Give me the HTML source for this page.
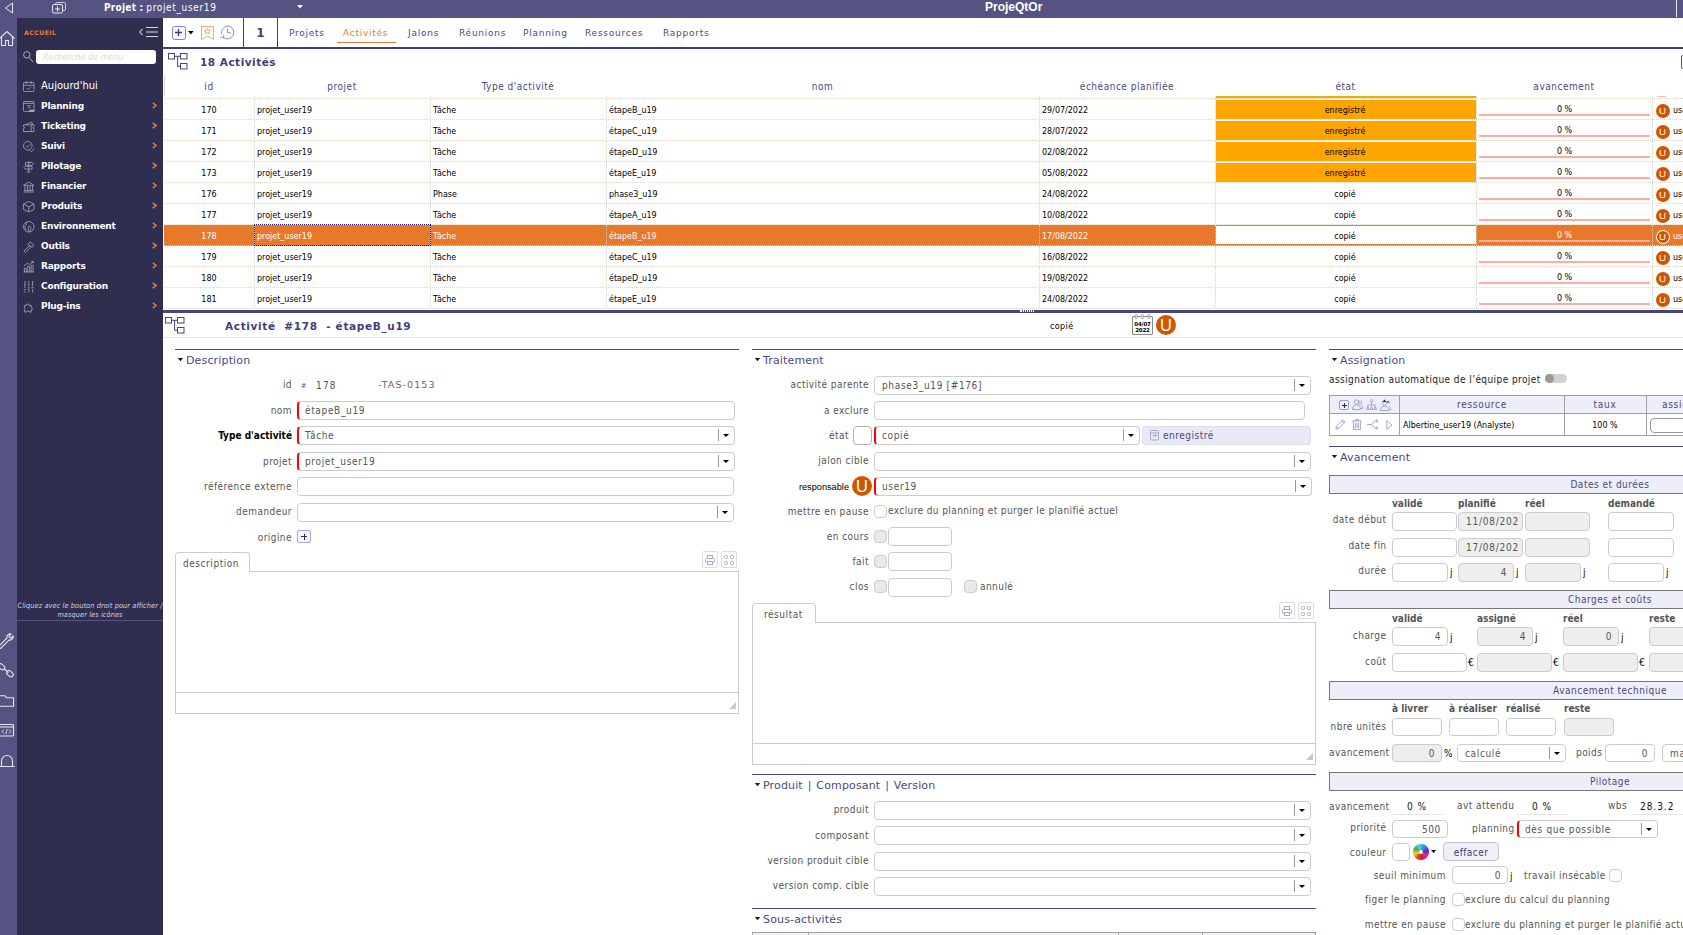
<!DOCTYPE html>
<html lang="fr">
<head>
<meta charset="utf-8">
<title>ProjeQtOr</title>
<style>
*{box-sizing:border-box;margin:0;padding:0}
html,body{width:1683px;height:935px;overflow:hidden;background:#fff}
body{font-family:"DejaVu Sans Condensed","DejaVu Sans","Liberation Sans",sans-serif;font-size:10px;letter-spacing:.45px;color:#555;position:relative}
.abs{position:absolute}
svg{display:block;overflow:visible}
/* top bar */
#topbar{left:0;top:0;width:1683px;height:18px;background:#545381;color:#fff}
#strip{left:0;top:18px;width:17px;height:917px;background:#545381}
#side{left:17px;top:18px;width:146px;height:917px;background:#2f2e4f;color:#fff}
.mi{position:absolute;left:24px;height:20px;line-height:20px;font-family:"DejaVu Sans",sans-serif;font-size:9px;letter-spacing:-.2px;font-weight:bold;color:#fff;white-space:nowrap;margin-top:1px}
.mi.n{font-weight:normal;font-size:10px;letter-spacing:0}
.ma{position:absolute;left:135px;font-family:"DejaVu Sans",sans-serif;font-size:8px;font-weight:bold;color:#e97b2c;line-height:20px;margin-top:1px;letter-spacing:0}
.mic{position:absolute;left:6px}
/* toolbar */
#tool{left:163px;top:18px;width:1520px;height:31px;background:#fff;border-bottom:2px solid #3f3e7b}
.tab{position:absolute;top:1px;height:29px;line-height:29px;font-family:"DejaVu Sans",sans-serif;font-size:9px;color:#4a4985;letter-spacing:.75px;white-space:nowrap}
/* grid */
.hd{position:absolute;top:75px;height:21px;line-height:21px;text-align:center;font-size:10px;color:#4a4985;letter-spacing:.52px;white-space:nowrap;margin-top:.5px}
.row{position:absolute;left:164px;width:1519px;height:21px;border-bottom:1px dotted #dcd8c8;font-family:"DejaVu Sans",sans-serif;font-size:8px;color:#000;line-height:24.5px;letter-spacing:0}
.row span{position:absolute;top:0;height:20px;white-space:nowrap}
.row .c{border-left:1px dotted #dcd8c8;padding-left:2px}
.row.sel{background:#e8792b;color:#fff}
.row.sel .c{border-left-color:#f3c79f}
.st{text-align:center}
.pg{position:absolute;left:1479px;width:171px;height:3px;background:#ffaaa5}
.uc{position:absolute;width:14px;height:14px;border-radius:50%;background:#d35400;color:#fff;font-size:9.7px;line-height:14.5px;text-align:center;font-family:"Liberation Sans",sans-serif;letter-spacing:0}

/* detail */
.t{position:absolute;height:14px;line-height:14px;white-space:nowrap;color:#555;margin-top:.5px}
.t.r{text-align:right}.t.c{text-align:center}
.t.b{font-weight:bold;color:#000;letter-spacing:.2px}
.t.b2{font-weight:bold;color:#555;letter-spacing:0;margin-top:-.25px}
.t.p{color:#4a4985}
.t.st{font-family:"DejaVu Sans",sans-serif;font-size:11px;letter-spacing:.15px;color:#4a4985;height:16px;line-height:16px;margin-top:-.25px}
.sl{position:absolute;height:1px;background:#4a4985}
.tri{position:absolute;width:5.4px;height:3.2px;background:#1c1c1c;clip-path:polygon(0 0,100% 0,50% 100%);margin-left:.3px}
.in{position:absolute;border:1px solid #ccc;border-radius:4px;background:#fff;line-height:18px;padding-left:7px;letter-spacing:.65px;color:#555;white-space:nowrap;overflow:hidden}
.in.rq{border-left:2px solid #f00;padding-left:6px}
.in.ro{background:#eee}
.in.num{text-align:right;padding-right:6px;padding-left:0}
.in .sp{position:absolute;right:15px;top:2px;width:1px;height:12px;background:#999}
.in .ar{position:absolute;right:5px;top:7px;width:0;height:0;border-left:3px solid transparent;border-right:3px solid transparent;border-top:3px solid #000}
.ck{position:absolute;width:13px;height:13px;border:1px solid #ccc;border-radius:4px;background:#fff}
.ck.g{background:#e9e9e9}
.bar{position:absolute;left:1329px;width:360px;height:19px;border:1px solid #777;background:#eeeef8}
.U{position:absolute;border-radius:50%;background:#d35400;color:#fff;text-align:center;font-family:"Liberation Sans",sans-serif;letter-spacing:0}
</style>
</head>
<body>
<!-- TOP BAR -->
<div id="topbar" class="abs">
  <svg class="abs" style="left:4px;top:2px" width="10" height="12" viewBox="0 0 10 12"><path d="M8.5 1 L1.5 6 L8.5 11 Z" fill="none" stroke="#e8e8f4" stroke-width="1"/></svg>
  <svg class="abs" style="left:52px;top:2px" width="15" height="12" viewBox="0 0 15 12"><rect x="3.5" y=".5" width="10" height="8" rx="1.5" fill="none" stroke="#c9c8e2" stroke-width="1"/><rect x=".5" y="2.5" width="10" height="8.5" rx="1.5" fill="#545381" stroke="#e8e8f4" stroke-width="1"/><path d="M5.5 4.5v5M3 7h5" stroke="#e8e8f4" stroke-width="1"/></svg>
  <div class="abs" style="left:104px;top:1px;height:14px;line-height:14px;font-size:10px;letter-spacing:0;white-space:nowrap"><b style="letter-spacing:.25px">Projet :</b>&nbsp;<span style="letter-spacing:.65px">projet_user19</span></div>
  <svg class="abs" style="left:297px;top:5px" width="6" height="4" viewBox="0 0 6 4"><path d="M0 0h6L3 3.5z" fill="#fff"/></svg>
  <div class="abs" style="left:985px;top:0;height:16px;line-height:15px;font-family:'Liberation Sans',sans-serif;font-weight:bold;font-size:12px;letter-spacing:0;color:#fff">ProjeQtOr</div>
  <div class="abs" style="left:1676px;top:0;width:1px;height:17px;background:#e8e8f4"></div>
</div>
<!-- ICON STRIP -->
<div id="strip" class="abs"><!--STRIPICONS-->
<svg class="abs" style="left:0;top:12px" width="15" height="17" viewBox="0 0 15 17" fill="none" stroke="#e4e4f2" stroke-width="1.100"><path d="M-.5 8.500L7 1.500l7.500 7M1.500 7v8.500h4v-5h3v5h4V7"/></svg>
<svg class="abs" style="left:0;top:615px" width="15" height="16" viewBox="0 0 15 16" fill="none" stroke="#e4e4f2" stroke-width="1.100"><path d="M-1 14.500l1.500 1L9 7a3.200 3.200 0 004-4l-2 2-1.500-.5L9 3l2-2a3.200 3.200 0 00-4 4L-1.500 13.500z"/></svg>
<svg class="abs" style="left:0;top:645px" width="15" height="16" viewBox="0 0 15 16" fill="none" stroke="#e4e4f2" stroke-width="1.100"><rect x="-2" y="1.500" width="7" height="4.500" rx="2.200" transform="rotate(40 1.500 3.700)"/><rect x="6.500" y="8.500" width="7" height="4.500" rx="2.200" transform="rotate(40 10 10.700)"/><path d="M4 5.500l4.500 4"/></svg>
<svg class="abs" style="left:0;top:677px" width="15" height="13" viewBox="0 0 15 13" fill="none" stroke="#e4e4f2" stroke-width="1.100"><path d="M-1 .800h6l1.500 2H13.500v8.500H-1"/></svg>
<svg class="abs" style="left:0;top:706px" width="15" height="13" viewBox="0 0 15 13" fill="none" stroke="#e4e4f2" stroke-width="1.100"><rect x="-1" y=".500" width="14.500" height="11.500" rx="1"/><path d="M-1 3h14.500"/><path d="M4 5.500L2 7.500l2 2M9 5.500l2 2-2 2M7.300 5L5.700 10" stroke-width=".9"/></svg>
<svg class="abs" style="left:0;top:735px" width="15" height="15" viewBox="0 0 15 15" fill="none" stroke="#e4e4f2" stroke-width="1.100"><path d="M1.500 13V8a5.500 5.500 0 0111 0v5M-.5 13.500h15"/></svg>
<!--/STRIPICONS--></div>
<!-- SIDEBAR -->
<div id="side" class="abs">
  <div class="abs" style="left:7px;top:10px;font-family:'DejaVu Sans',sans-serif;font-size:6.2px;font-weight:bold;color:#e97b2c;letter-spacing:.45px;line-height:10px">ACCUEIL</div>
  <div class="abs" style="left:19px;top:32px;width:120px;height:14px;border-radius:3px;background:#fff;font-size:8.5px;font-style:italic;color:#d8d8d8;line-height:14px;padding-left:7px;letter-spacing:.2px">Recherche de menu</div>
  <div class="mi n" style="top:57px">Aujourd'hui</div>
  <div class="mi" style="top:77px">Planning</div>
  <div class="mi" style="top:97px">Ticketing</div>
  <div class="mi" style="top:117px">Suivi</div>
  <div class="mi" style="top:137px">Pilotage</div>
  <div class="mi" style="top:157px">Financier</div>
  <div class="mi" style="top:177px">Produits</div>
  <div class="mi" style="top:197px">Environnement</div>
  <div class="mi" style="top:217px">Outils</div>
  <div class="mi" style="top:237px">Rapports</div>
  <div class="mi" style="top:257px">Configuration</div>
  <div class="mi" style="top:277px">Plug-ins</div>
  <div class="abs" style="left:0;top:583px;width:146px;text-align:center;font-size:7.3px;letter-spacing:.1px;font-style:italic;color:#d0d0e0;line-height:9px">Cliquez avec le bouton droit pour afficher /<br>masquer les icônes</div>
  <div class="abs" style="left:0;top:602px;width:146px;height:1px;background:#545381"></div>
<!--SIDEICONS-->
<svg class="abs" style="left:6px;top:63px" width="11.500" height="11.500" viewBox="0 0 12 12" fill="none" stroke="#adacc9" stroke-width=".8"><rect x=".5" y="1.5" width="11" height="9.5" rx="1"/><path d="M.5 4.5h11M3.5 0v3M8.5 0v3M4 7.5l1.5 1.5L8.2 6.3"/></svg>
<svg class="abs" style="left:6px;top:83px" width="11.500" height="11.500" viewBox="0 0 12 12" fill="none" stroke="#adacc9" stroke-width=".8"><rect x=".5" y=".5" width="11" height="10.5" rx="1"/><path d="M.5 2.5h11M4 5h4.5M5 7h3"/><path d="M7 9.5h4.5v1.5H7z" fill="#adacc9"/></svg>
<svg class="abs" style="left:6px;top:103px" width="11.500" height="11.500" viewBox="0 0 12 12" fill="none" stroke="#adacc9" stroke-width=".8"><path d="M.5 4h11v2a1 1 0 000 2v3h-11V8a1 1 0 000-2zM8.5 4v7M2 4l7-2.8L10 4"/></svg>
<svg class="abs" style="left:6px;top:123px" width="11.500" height="11.500" viewBox="0 0 12 12" fill="none" stroke="#adacc9" stroke-width=".8"><circle cx="5" cy="5" r="4.5"/><path d="M3 5l1.5 1.5L7.5 3.5M6.8 9.5l1.7 1.7L12 7.8"/></svg>
<svg class="abs" style="left:6px;top:143px" width="11.500" height="11.500" viewBox="0 0 12 12" fill="none" stroke="#adacc9" stroke-width=".8"><path d="M6 .5v11M4 11.5h4M2.5 1.5h7L11 3 9.5 4.5h-7zM9.5 5.5h-7L1 7l1.500 1.500h7z"/></svg>
<svg class="abs" style="left:6px;top:163px" width="11.500" height="11.500" viewBox="0 0 12 12" fill="none" stroke="#adacc9" stroke-width=".8"><path d="M.5 4.5L6 1l5.500 3.500zM2 5v5M4.700 5v5M7.300 5v5M10 5v5M.5 11.500h11M1 10h10"/></svg>
<svg class="abs" style="left:6px;top:183px" width="11.500" height="11.500" viewBox="0 0 12 12" fill="none" stroke="#adacc9" stroke-width=".8"><path d="M6 .5l5.500 2.750v5.500L6 11.500.5 8.750v-5.500zM.5 3.250L6 6l5.500-2.750M6 6v5.500"/></svg>
<svg class="abs" style="left:6px;top:203px" width="11.500" height="11.500" viewBox="0 0 12 12" fill="none" stroke="#adacc9" stroke-width=".8"><circle cx="6" cy="6" r="5.500"/><path d="M3.500 1.200c1 1.500.5 2.800-1 3.800s0 3 1 4.500M6.500 5.500c1.500 0 2 1 1.500 2.300S7.500 9.500 8.300 10.800M6.300 5.500c-.8 1.500-1.300 3 0 5.800"/></svg>
<svg class="abs" style="left:6px;top:223px" width="11.500" height="11.500" viewBox="0 0 12 12" fill="none" stroke="#adacc9" stroke-width=".8"><path d="M1 10.500l5.500-5.500 1.500 1.500L2.500 12zM5 3.500L7.500 1l4 3.500L9.500 6.500z"/></svg>
<svg class="abs" style="left:6px;top:243px" width="11.500" height="11.500" viewBox="0 0 12 12" fill="none" stroke="#adacc9" stroke-width=".8"><path d="M.5 11.500h11M1.500 11.500v-4h2v4M5 11.500v-6h2v6M8.500 11.500v-7h2v7M1 5l3.500-2.500L7 3.500 10.500.8M8.800.5h2v2"/></svg>
<svg class="abs" style="left:6px;top:263px" width="11.500" height="11.500" viewBox="0 0 12 12" fill="none" stroke="#adacc9" stroke-width=".8"><path d="M2 0v7.500M2 10.500V12M6 0v2M6 5v7M10 0v5.500M10 8.500V12M.8 9h2.400M4.800 3.500h2.400M8.800 7h2.400"/></svg>
<svg class="abs" style="left:6px;top:283px" width="11.500" height="11.500" viewBox="0 0 12 12" fill="none" stroke="#adacc9" stroke-width=".8"><path d="M1.5 4.5h2a1.3 1.3 0 0 1 2.6 0h2.4v2.2a1.3 1.3 0 0 1 0 2.6v2.2h-2.2a1.3 1.3 0 0 0 -2.6 0h-2.2v-2.400a1.300 1.300 0 0 0 0 -2.400z"/></svg>
<svg class="abs" style="left:134.500px;top:83.5px" width="5" height="7" viewBox="0 0 5 7" fill="none" stroke="#e97b2c" stroke-width="1.600"><path d="M.8 .8L4 3.500.8 6.200"/></svg>
<svg class="abs" style="left:134.500px;top:103.5px" width="5" height="7" viewBox="0 0 5 7" fill="none" stroke="#e97b2c" stroke-width="1.600"><path d="M.8 .8L4 3.500.8 6.200"/></svg>
<svg class="abs" style="left:134.500px;top:123.5px" width="5" height="7" viewBox="0 0 5 7" fill="none" stroke="#e97b2c" stroke-width="1.600"><path d="M.8 .8L4 3.500.8 6.200"/></svg>
<svg class="abs" style="left:134.500px;top:143.5px" width="5" height="7" viewBox="0 0 5 7" fill="none" stroke="#e97b2c" stroke-width="1.600"><path d="M.8 .8L4 3.500.8 6.200"/></svg>
<svg class="abs" style="left:134.500px;top:163.5px" width="5" height="7" viewBox="0 0 5 7" fill="none" stroke="#e97b2c" stroke-width="1.600"><path d="M.8 .8L4 3.500.8 6.200"/></svg>
<svg class="abs" style="left:134.500px;top:183.5px" width="5" height="7" viewBox="0 0 5 7" fill="none" stroke="#e97b2c" stroke-width="1.600"><path d="M.8 .8L4 3.500.8 6.200"/></svg>
<svg class="abs" style="left:134.500px;top:203.5px" width="5" height="7" viewBox="0 0 5 7" fill="none" stroke="#e97b2c" stroke-width="1.600"><path d="M.8 .8L4 3.500.8 6.200"/></svg>
<svg class="abs" style="left:134.500px;top:223.5px" width="5" height="7" viewBox="0 0 5 7" fill="none" stroke="#e97b2c" stroke-width="1.600"><path d="M.8 .8L4 3.500.8 6.200"/></svg>
<svg class="abs" style="left:134.500px;top:243.5px" width="5" height="7" viewBox="0 0 5 7" fill="none" stroke="#e97b2c" stroke-width="1.600"><path d="M.8 .8L4 3.500.8 6.200"/></svg>
<svg class="abs" style="left:134.500px;top:263.5px" width="5" height="7" viewBox="0 0 5 7" fill="none" stroke="#e97b2c" stroke-width="1.600"><path d="M.8 .8L4 3.500.8 6.200"/></svg>
<svg class="abs" style="left:134.500px;top:283.5px" width="5" height="7" viewBox="0 0 5 7" fill="none" stroke="#e97b2c" stroke-width="1.600"><path d="M.8 .8L4 3.500.8 6.200"/></svg>
<svg class="abs" style="left:122px;top:8px" width="20" height="12" viewBox="0 0 20 12" fill="none" stroke="#d6d6e8" stroke-width="1.100"><path d="M3.500 3L.8 6l2.700 3M7 1.500h12M7 6h12M7 10.500h12"/></svg>
<svg class="abs" style="left:6px;top:33px" width="11" height="12" viewBox="0 0 11 12" fill="none" stroke="#adacc9" stroke-width="1"><circle cx="3.800" cy="3.800" r="3.200"/><path d="M6 6.500l4 4.500"/></svg>
<!--/SIDEICONS-->
</div>
<!-- TOOLBAR -->
<div id="tool" class="abs">
<!--TOOLICONS-->
<div class="abs" style="left:8.500px;top:7.500px;width:14px;height:14px;border:1px solid #8483ba;border-radius:2.500px;background:#f7f7fd"></div>
<svg class="abs" style="left:12px;top:11px" width="7" height="7" viewBox="0 0 7 7" stroke="#3f3e7b" stroke-width="1.300"><path d="M3.500 0v7M0 3.500h7"/></svg>
<svg class="abs" style="left:25px;top:13px" width="6" height="4" viewBox="0 0 6 4"><path d="M0 0h5.600L2.800 3.400z" fill="#000"/></svg>
<svg class="abs" style="left:38px;top:7.500px" width="13" height="14" viewBox="0 0 13 14" fill="none" stroke="#f2a06a" stroke-width=".9"><path d="M.5 .5h12v13L6.500 10 .5 13.500z"/><path d="M6.500 2.300l.9 1.900 2 .2-1.500 1.400.4 2-1.800-1-1.800 1 .4-2L3.600 4.400l2-.2z"/></svg>
<svg class="abs" style="left:57px;top:7px" width="15" height="15" viewBox="0 0 15 15" fill="none" stroke="#8483ba" stroke-width=".9"><path d="M3.200 12.500A6.500 6.500 0 108 1a6.500 6.500 0 00-6.200 8.500"/><path d="M.3 11.800l3.200 1.200.3-3.200"/><path d="M7.500 3.500v4.300h3.500"/></svg>
<!--/TOOLICONS-->
  <div class="abs" style="left:80px;top:0;width:1px;height:29px;background:#3f3e7b"></div>
  <div class="abs" style="left:114px;top:0;width:1px;height:29px;background:#3f3e7b"></div>
  <div class="abs" style="left:81px;top:0;width:33px;height:29px;line-height:30px;text-align:center;font-family:'DejaVu Sans',sans-serif;font-size:12px;letter-spacing:0;font-weight:bold;color:#3f3e7b">1</div>
  <div class="tab" style="left:126px">Projets</div>
  <div class="tab" style="left:180px;color:#e97b2c">Activités</div>
  <div class="abs" style="left:174px;top:24px;width:59px;height:1px;background:#e97b2c"></div>
  <div class="tab" style="left:245px">Jalons</div>
  <div class="tab" style="left:296px">Réunions</div>
  <div class="tab" style="left:360px">Planning</div>
  <div class="tab" style="left:422px">Ressources</div>
  <div class="tab" style="left:500px">Rapports</div>
</div>
<!-- LIST HEADER -->
<div class="abs" style="left:200px;top:54px;height:16px;line-height:16px;font-family:'DejaVu Sans',sans-serif;font-size:10.5px;letter-spacing:.5px;font-weight:bold;color:#3f3e7b;white-space:nowrap;margin-top:-.5px">18 Activités</div>
<div class="abs" style="left:1681px;top:55px;width:6px;height:14px;border:1px solid #545381;border-radius:2px"></div>
<div class="hd" style="left:164px;width:90px">id</div>
<div class="hd" style="left:254px;width:176px">projet</div>
<div class="hd" style="left:430px;width:176px">Type d'activité</div>
<div class="hd" style="left:606px;width:433px">nom</div>
<div class="hd" style="left:1039px;width:176px">échéance planifiée</div>
<div class="hd" style="left:1215px;width:261px">état</div>
<div class="hd" style="left:1476px;width:176px">avancement</div>
<div class="abs" style="left:164px;top:75px;width:1px;height:21px;background:#d8d8d8"></div>
<div id="grid"><div class="abs" style="left:1216px;top:96px;width:260px;height:2px;background:#ffa500"></div>
<div class="abs" style="left:1657px;top:96px;width:9px;height:1px;background:#f3c4b0"></div>
<div class="abs" style="left:164px;top:98px;width:1519px;height:0;border-top:1px dotted #dcd8c8"></div>
<div class="abs" style="left:254px;top:96px;width:0;height:3px;border-left:1px dotted #dcd8c8"></div>
<div class="abs" style="left:430px;top:96px;width:0;height:3px;border-left:1px dotted #dcd8c8"></div>
<div class="abs" style="left:606px;top:96px;width:0;height:3px;border-left:1px dotted #dcd8c8"></div>
<div class="abs" style="left:1039px;top:96px;width:0;height:3px;border-left:1px dotted #dcd8c8"></div>
<div class="abs" style="left:1215px;top:96px;width:0;height:3px;border-left:1px dotted #dcd8c8"></div>
<div class="abs" style="left:1476px;top:96px;width:0;height:3px;border-left:1px dotted #dcd8c8"></div>
<div class="abs" style="left:1652px;top:96px;width:0;height:3px;border-left:1px dotted #dcd8c8"></div>
<div class="row" style="top:99px"><span style="left:0;width:90px;text-align:center">170</span><span class="c" style="left:90px;width:176px;">projet_user19</span><span class="c" style="left:266px;width:176px;">Tâche</span><span class="c" style="left:442px;width:433px;">étapeB_u19</span><span class="c" style="left:875px;width:176px;">29/07/2022</span><span class="c st" style="left:1051px;width:261px;"><i class="abs" style="left:0;top:1px;width:260px;height:18.5px;background:#ffa500"></i><b class="abs" style="left:0;width:258px;font-weight:normal">enregistré</b></span><span class="c" style="left:1312px;width:176px;text-align:center;padding:0;line-height:22.5px">0 %</span><i class="pg" style="left:1315px;top:14.5px;height:2px"></i><span class="c" style="left:1488px;width:31px;"></span><i class="uc" style="left:1491.5px;top:4.5px;font-style:normal">U</i><span style="left:1509px">user19</span></div>
<div class="row" style="top:120px"><span style="left:0;width:90px;text-align:center">171</span><span class="c" style="left:90px;width:176px;">projet_user19</span><span class="c" style="left:266px;width:176px;">Tâche</span><span class="c" style="left:442px;width:433px;">étapeC_u19</span><span class="c" style="left:875px;width:176px;">28/07/2022</span><span class="c st" style="left:1051px;width:261px;"><i class="abs" style="left:0;top:1px;width:260px;height:18.5px;background:#ffa500"></i><b class="abs" style="left:0;width:258px;font-weight:normal">enregistré</b></span><span class="c" style="left:1312px;width:176px;text-align:center;padding:0;line-height:22.5px">0 %</span><i class="pg" style="left:1315px;top:14.5px;height:2px"></i><span class="c" style="left:1488px;width:31px;"></span><i class="uc" style="left:1491.5px;top:4.5px;font-style:normal">U</i><span style="left:1509px">user19</span></div>
<div class="row" style="top:141px"><span style="left:0;width:90px;text-align:center">172</span><span class="c" style="left:90px;width:176px;">projet_user19</span><span class="c" style="left:266px;width:176px;">Tâche</span><span class="c" style="left:442px;width:433px;">étapeD_u19</span><span class="c" style="left:875px;width:176px;">02/08/2022</span><span class="c st" style="left:1051px;width:261px;"><i class="abs" style="left:0;top:1px;width:260px;height:18.5px;background:#ffa500"></i><b class="abs" style="left:0;width:258px;font-weight:normal">enregistré</b></span><span class="c" style="left:1312px;width:176px;text-align:center;padding:0;line-height:22.5px">0 %</span><i class="pg" style="left:1315px;top:14.5px;height:2px"></i><span class="c" style="left:1488px;width:31px;"></span><i class="uc" style="left:1491.5px;top:4.5px;font-style:normal">U</i><span style="left:1509px">user19</span></div>
<div class="row" style="top:162px"><span style="left:0;width:90px;text-align:center">173</span><span class="c" style="left:90px;width:176px;">projet_user19</span><span class="c" style="left:266px;width:176px;">Tâche</span><span class="c" style="left:442px;width:433px;">étapeE_u19</span><span class="c" style="left:875px;width:176px;">05/08/2022</span><span class="c st" style="left:1051px;width:261px;"><i class="abs" style="left:0;top:1px;width:260px;height:18.5px;background:#ffa500"></i><b class="abs" style="left:0;width:258px;font-weight:normal">enregistré</b></span><span class="c" style="left:1312px;width:176px;text-align:center;padding:0;line-height:22.5px">0 %</span><i class="pg" style="left:1315px;top:14.5px;height:2px"></i><span class="c" style="left:1488px;width:31px;"></span><i class="uc" style="left:1491.5px;top:4.5px;font-style:normal">U</i><span style="left:1509px">user19</span></div>
<div class="row" style="top:183px"><span style="left:0;width:90px;text-align:center">176</span><span class="c" style="left:90px;width:176px;">projet_user19</span><span class="c" style="left:266px;width:176px;">Phase</span><span class="c" style="left:442px;width:433px;">phase3_u19</span><span class="c" style="left:875px;width:176px;">24/08/2022</span><span class="c st" style="left:1051px;width:261px;"><b class="abs" style="left:0;width:258px;font-weight:normal">copié</b></span><span class="c" style="left:1312px;width:176px;text-align:center;padding:0;line-height:22.5px">0 %</span><i class="pg" style="left:1315px;top:14.5px;height:2px"></i><span class="c" style="left:1488px;width:31px;"></span><i class="uc" style="left:1491.5px;top:4.5px;font-style:normal">U</i><span style="left:1509px">user19</span></div>
<div class="row" style="top:204px"><span style="left:0;width:90px;text-align:center">177</span><span class="c" style="left:90px;width:176px;">projet_user19</span><span class="c" style="left:266px;width:176px;">Tâche</span><span class="c" style="left:442px;width:433px;">étapeA_u19</span><span class="c" style="left:875px;width:176px;">10/08/2022</span><span class="c st" style="left:1051px;width:261px;"><b class="abs" style="left:0;width:258px;font-weight:normal">copié</b></span><span class="c" style="left:1312px;width:176px;text-align:center;padding:0;line-height:22.5px">0 %</span><i class="pg" style="left:1315px;top:14.5px;height:2px"></i><span class="c" style="left:1488px;width:31px;"></span><i class="uc" style="left:1491.5px;top:4.5px;font-style:normal">U</i><span style="left:1509px">user19</span></div>
<div class="row sel" style="top:225px"><span style="left:0;width:90px;text-align:center">178</span><span class="c" style="left:90px;width:176px;">projet_user19</span><span class="c" style="left:266px;width:176px;">Tâche</span><span class="c" style="left:442px;width:433px;">étapeB_u19</span><span class="c" style="left:875px;width:176px;">17/08/2022</span><span class="c st" style="left:1051px;width:261px;"><i class="abs" style="left:0;top:1px;width:260px;height:18px;background:#fff"></i><b class="abs" style="left:0;width:258px;font-weight:normal;color:#000">copié</b></span><span class="c" style="left:1312px;width:176px;text-align:center;padding:0;line-height:22.5px">0 %</span><i class="pg" style="left:1315px;top:14.5px;height:2px"></i><span class="c" style="left:1488px;width:31px;"></span><i class="uc" style="left:1491.5px;top:4.5px;font-style:normal;background:#d35400;box-shadow:inset 0 0 0 1px #fff">U</i><span style="left:1509px">user19</span></div>
<div class="row" style="top:246px"><span style="left:0;width:90px;text-align:center">179</span><span class="c" style="left:90px;width:176px;">projet_user19</span><span class="c" style="left:266px;width:176px;">Tâche</span><span class="c" style="left:442px;width:433px;">étapeC_u19</span><span class="c" style="left:875px;width:176px;">16/08/2022</span><span class="c st" style="left:1051px;width:261px;"><b class="abs" style="left:0;width:258px;font-weight:normal">copié</b></span><span class="c" style="left:1312px;width:176px;text-align:center;padding:0;line-height:22.5px">0 %</span><i class="pg" style="left:1315px;top:14.5px;height:2px"></i><span class="c" style="left:1488px;width:31px;"></span><i class="uc" style="left:1491.5px;top:4.5px;font-style:normal">U</i><span style="left:1509px">user19</span></div>
<div class="row" style="top:267px"><span style="left:0;width:90px;text-align:center">180</span><span class="c" style="left:90px;width:176px;">projet_user19</span><span class="c" style="left:266px;width:176px;">Tâche</span><span class="c" style="left:442px;width:433px;">étapeD_u19</span><span class="c" style="left:875px;width:176px;">19/08/2022</span><span class="c st" style="left:1051px;width:261px;"><b class="abs" style="left:0;width:258px;font-weight:normal">copié</b></span><span class="c" style="left:1312px;width:176px;text-align:center;padding:0;line-height:22.5px">0 %</span><i class="pg" style="left:1315px;top:14.5px;height:2px"></i><span class="c" style="left:1488px;width:31px;"></span><i class="uc" style="left:1491.5px;top:4.5px;font-style:normal">U</i><span style="left:1509px">user19</span></div>
<div class="row" style="top:288px"><span style="left:0;width:90px;text-align:center">181</span><span class="c" style="left:90px;width:176px;">projet_user19</span><span class="c" style="left:266px;width:176px;">Tâche</span><span class="c" style="left:442px;width:433px;">étapeE_u19</span><span class="c" style="left:875px;width:176px;">24/08/2022</span><span class="c st" style="left:1051px;width:261px;"><b class="abs" style="left:0;width:258px;font-weight:normal">copié</b></span><span class="c" style="left:1312px;width:176px;text-align:center;padding:0;line-height:22.5px">0 %</span><i class="pg" style="left:1315px;top:14.5px;height:2px"></i><span class="c" style="left:1488px;width:31px;"></span><i class="uc" style="left:1491.5px;top:4.5px;font-style:normal">U</i><span style="left:1509px">user19</span></div>
<div class="abs" style="left:254px;top:224px;width:177px;height:22px;border:1px dotted #1a1a8a"></div></div><!--/grid-->
<div class="abs" style="left:163px;top:310px;width:1520px;height:2.500px;background:#45447f"></div>
<!--DETAIL-->
<div class="abs" style="left:163px;top:337px;width:1520px;height:1px;background:#e2e2ee"></div>
<div class="t " style="left:225px;top:318.5px;font-family:'DejaVu Sans',sans-serif;font-size:10.5px;font-weight:bold;color:#3f3e7b;letter-spacing:.65px">Activité&nbsp; #178&nbsp; - étapeB_u19</div>
<div class="t " style="left:1050px;top:319.5px;font-family:'DejaVu Sans',sans-serif;font-size:8px;color:#000;letter-spacing:.4px">copié</div>
<div class="U" style="left:1156px;top:315px;width:20px;height:20px;line-height:20px;font-size:16.5px">U</div>
<div class="sl" style="left:175px;top:349px;width:564px"></div>
<i class="tri" style="left:177.5px;top:358px"></i>
<div class="t st" style="left:186px;top:353px;">Description</div>
<div class="t r " style="left:-8px;width:300px;top:377.5px;">id</div>
<div class="t " style="left:301px;top:378px;font-size:7px">#</div>
<div class="t " style="left:316px;top:378.5px;letter-spacing:1.2px">178</div>
<div class="t " style="left:378px;top:377.5px;font-family:'DejaVu Sans',sans-serif;font-size:9.5px;letter-spacing:1.1px;color:#666">-TAS-0153</div>
<div class="t r " style="left:-8px;width:300px;top:403px;">nom</div>
<div class="in rq" style="left:297px;top:401px;width:438px;height:19px;">étapeB_u19</div>
<div class="t r b" style="left:-8px;width:300px;top:428.5px;letter-spacing:0">Type d'activité</div>
<div class="in rq" style="left:297px;top:426px;width:438px;height:19px;">Tâche<i class="sp"></i><i class="ar"></i></div>
<div class="t r " style="left:-8px;width:300px;top:454px;">projet</div>
<div class="in rq" style="left:297px;top:452px;width:438px;height:19px;">projet_user19<i class="sp"></i><i class="ar"></i></div>
<div class="t r " style="left:-8px;width:300px;top:479px;">référence externe</div>
<div class="in " style="left:297px;top:477px;width:437px;height:19px;"></div>
<div class="t r " style="left:-8px;width:300px;top:504.5px;">demandeur</div>
<div class="in " style="left:297px;top:502.5px;width:437px;height:19px;"><i class="sp"></i><i class="ar"></i></div>
<div class="t r " style="left:-8px;width:300px;top:530px;">origine</div>
<div class="abs" style="left:297px;top:530px;width:14px;height:13px;border:1px solid #a9a8d0;border-radius:2px;background:#f4f4fb"><i class="abs" style="left:3px;top:5px;width:6px;height:1px;background:#2a2a7a"></i><i class="abs" style="left:5.5px;top:2.5px;width:1px;height:6px;background:#2a2a7a"></i></div>
<div class="abs" style="left:175px;top:571px;width:564px;height:121.5px;border:1px solid #ccc;background:#fff"></div>
<div class="abs" style="left:175px;top:691.5px;width:564px;height:22px;border:1px solid #ccc;background:#fff"></div>
<div class="abs" style="left:175px;top:552px;width:75px;height:20px;border:1px solid #ccc;border-bottom:none;border-radius:4px 4px 0 0;background:#fff"></div>
<div class="t " style="left:183px;top:556px;letter-spacing:.55px">description</div>
<svg class="abs" style="left:729px;top:701.5px" width="7" height="7" viewBox="0 0 7 7"><path d="M7 0V7H0z" fill="#c8c8c8"/></svg>
<div class="abs" style="left:702px;top:551px;width:16px;height:17px;border:1px solid #ddd;border-radius:2px;background:#fff"></div>
<div class="abs" style="left:721px;top:551px;width:16px;height:17px;border:1px solid #ddd;border-radius:2px;background:#fff"></div>
<svg class="abs" style="left:705px;top:554.5px" width="10" height="10" viewBox="0 0 10 10" fill="none" stroke="#a9a8d0" stroke-width="1"><rect x="2.5" y=".5" width="5" height="3"/><rect x=".5" y="3.5" width="9" height="4" rx="1"/><rect x="2.5" y="6.5" width="5" height="3" fill="#fff"/></svg>
<svg class="abs" style="left:724px;top:554.5px" width="10" height="10" viewBox="0 0 10 10" fill="none" stroke="#a9a8d0" stroke-width="1"><rect x=".5" y=".5" width="3" height="3" rx="1"/><rect x="6.5" y=".5" width="3" height="3" rx="1"/><rect x=".5" y="6.5" width="3" height="3" rx="1"/><rect x="6.5" y="6.5" width="3" height="3" rx="1"/></svg>
<div class="sl" style="left:752px;top:349px;width:564px"></div>
<i class="tri" style="left:754.5px;top:358px"></i>
<div class="t st" style="left:763px;top:353px;">Traitement</div>
<div class="t r " style="left:569px;width:300px;top:377.5px;">activité parente</div>
<div class="in " style="left:874px;top:376px;width:437px;height:19px;">phase3_u19 [#176]<i class="sp"></i><i class="ar"></i></div>
<div class="t r " style="left:569px;width:300px;top:403px;">a exclure</div>
<div class="in " style="left:874px;top:401px;width:431px;height:19px;"></div>
<div class="t r " style="left:549px;width:300px;top:428.5px;">état</div>
<div class="abs" style="left:853px;top:426px;width:19px;height:19px;border:1px solid #b0b0b0;border-radius:4px;background:#fff"></div>
<div class="in rq" style="left:874px;top:426px;width:266px;height:19px;">copié<i class="sp"></i><i class="ar"></i></div>
<div class="abs" style="left:1142px;top:426px;width:169px;height:19px;border-radius:3px;background:#e9e9f6;border:1px solid #dedeee"></div>
<svg class="abs" style="left:1150px;top:430px" width="10" height="11" viewBox="0 0 10 11" fill="none" stroke="#a9a8d0" stroke-width="1"><rect x=".5" y=".5" width="8" height="9.5" rx="1"/><path d="M1 3h7M2.5 5.5h4M5 4l1.5 1.5L5 7"/></svg>
<div class="t p" style="left:1163px;top:428px;letter-spacing:.5px">enregistré</div>
<div class="t r " style="left:569px;width:300px;top:453.5px;">jalon cible</div>
<div class="in " style="left:874px;top:452px;width:437px;height:19px;"><i class="sp"></i><i class="ar"></i></div>
<div class="t r " style="left:549px;width:300px;top:479px;font-family:'Liberation Sans',sans-serif;color:#000;letter-spacing:0;font-size:9.2px">responsable</div>
<div class="U" style="left:852px;top:476px;width:20px;height:20px;line-height:20px;font-size:16.5px">U</div>
<div class="in rq" style="left:874px;top:477px;width:438px;height:19px;">user19<i class="sp"></i><i class="ar"></i></div>
<div class="t r " style="left:569px;width:300px;top:504.5px;">mettre en pause</div>
<div class="ck" style="left:874px;top:505px"></div>
<div class="t " style="left:888px;top:503.5px;letter-spacing:.4px">exclure du planning et purger le planifié actuel</div>
<div class="t r " style="left:569px;width:300px;top:529px;">en cours</div>
<div class="ck g" style="left:874px;top:530px"></div>
<div class="in " style="left:888px;top:527px;width:64px;height:19px;"></div>
<div class="t r " style="left:569px;width:300px;top:554.5px;">fait</div>
<div class="ck g" style="left:874px;top:555px"></div>
<div class="in " style="left:888px;top:552px;width:64px;height:19px;"></div>
<div class="t r " style="left:569px;width:300px;top:579.5px;">clos</div>
<div class="ck g" style="left:874px;top:580px"></div>
<div class="in " style="left:888px;top:577.5px;width:64px;height:19px;"></div>
<div class="ck g" style="left:964px;top:580px"></div>
<div class="t " style="left:980px;top:579px;">annulé</div>
<div class="abs" style="left:752px;top:622px;width:564px;height:122px;border:1px solid #ccc;background:#fff"></div>
<div class="abs" style="left:752px;top:743px;width:564px;height:22px;border:1px solid #ccc;background:#fff"></div>
<div class="abs" style="left:752px;top:603px;width:64px;height:20px;border:1px solid #ccc;border-bottom:none;border-radius:4px 4px 0 0;background:#fff"></div>
<div class="t " style="left:764px;top:607px;letter-spacing:.55px">résultat</div>
<svg class="abs" style="left:1306px;top:753px" width="7" height="7" viewBox="0 0 7 7"><path d="M7 0V7H0z" fill="#c8c8c8"/></svg>
<div class="abs" style="left:1279px;top:602px;width:16px;height:17px;border:1px solid #ddd;border-radius:2px;background:#fff"></div>
<div class="abs" style="left:1298px;top:602px;width:16px;height:17px;border:1px solid #ddd;border-radius:2px;background:#fff"></div>
<svg class="abs" style="left:1282px;top:605.5px" width="10" height="10" viewBox="0 0 10 10" fill="none" stroke="#a9a8d0" stroke-width="1"><rect x="2.5" y=".5" width="5" height="3"/><rect x=".5" y="3.5" width="9" height="4" rx="1"/><rect x="2.5" y="6.5" width="5" height="3" fill="#fff"/></svg>
<svg class="abs" style="left:1301px;top:605.5px" width="10" height="10" viewBox="0 0 10 10" fill="none" stroke="#a9a8d0" stroke-width="1"><rect x=".5" y=".5" width="3" height="3" rx="1"/><rect x="6.5" y=".5" width="3" height="3" rx="1"/><rect x=".5" y="6.5" width="3" height="3" rx="1"/><rect x="6.5" y="6.5" width="3" height="3" rx="1"/></svg>
<div class="sl" style="left:752px;top:774px;width:564px"></div>
<i class="tri" style="left:754.5px;top:783px"></i>
<div class="t st" style="left:763px;top:778px;"><span style="word-spacing:1.2px">Produit | Composant | Version</span></div>
<div class="t r " style="left:569px;width:300px;top:802.5px;">produit</div>
<div class="in " style="left:874px;top:801px;width:437px;height:19px;"><i class="sp"></i><i class="ar"></i></div>
<div class="t r " style="left:569px;width:300px;top:828.5px;">composant</div>
<div class="in " style="left:874px;top:826px;width:437px;height:19px;"><i class="sp"></i><i class="ar"></i></div>
<div class="t r " style="left:569px;width:300px;top:853.5px;">version produit cible</div>
<div class="in " style="left:874px;top:852px;width:437px;height:19px;"><i class="sp"></i><i class="ar"></i></div>
<div class="t r " style="left:569px;width:300px;top:878.5px;">version comp. cible</div>
<div class="in " style="left:874px;top:877px;width:437px;height:19px;"><i class="sp"></i><i class="ar"></i></div>
<div class="sl" style="left:752px;top:908px;width:564px"></div>
<i class="tri" style="left:754.5px;top:917px"></i>
<div class="t st" style="left:763px;top:912px;">Sous-activités</div>
<div class="abs" style="left:752px;top:932px;width:564px;height:10px;border:1px solid #a0a0a0;background:#eeeef8"></div>
<div class="abs" style="left:808px;top:932px;width:1px;height:10px;background:#a0a0a0"></div>
<div class="abs" style="left:1118px;top:932px;width:1px;height:10px;background:#a0a0a0"></div>
<div class="abs" style="left:1202px;top:932px;width:1px;height:10px;background:#a0a0a0"></div>
<div class="sl" style="left:1329px;top:349px;width:361px"></div>
<i class="tri" style="left:1331.5px;top:358px"></i>
<div class="t st" style="left:1340px;top:353px;">Assignation</div>
<div class="t " style="left:1329px;top:372px;color:#222;letter-spacing:.42px">assignation automatique de l’équipe projet</div>
<div class="abs" style="left:1545px;top:374px;width:22px;height:9px;border-radius:5px;background:#d2d2d2"><i class="abs" style="left:0;top:0;width:9px;height:9px;border-radius:50%;background:#9a9a9a"></i></div>
<div class="abs" style="left:1329px;top:395px;width:360px;height:19px;background:#eeeef8;border:1px solid #a0a0a0"></div>
<div class="abs" style="left:1329px;top:413px;width:360px;height:23px;border:1px solid #a0a0a0"></div>
<div class="abs" style="left:1399px;top:395px;width:1px;height:41px;background:#a0a0a0"></div>
<div class="abs" style="left:1564px;top:395px;width:1px;height:41px;background:#a0a0a0"></div>
<div class="abs" style="left:1646px;top:395px;width:1px;height:41px;background:#a0a0a0"></div>
<div class="t c p" style="left:1332px;width:300px;top:397.5px;letter-spacing:.7px">ressource</div>
<div class="t c p" style="left:1455px;width:300px;top:397.5px;letter-spacing:.7px">taux</div>
<div class="t p" style="left:1662px;top:397.5px;letter-spacing:.7px">assigné</div>
<div class="t " style="left:1403px;top:418.5px;font-family:'DejaVu Sans',sans-serif;font-size:8px;color:#000;letter-spacing:0">Albertine_user19 (Analyste)</div>
<div class="t c " style="left:1455px;width:300px;top:418.5px;font-family:'DejaVu Sans',sans-serif;font-size:8px;color:#000;letter-spacing:0">100 %</div>
<div class="abs" style="left:1650px;top:418px;width:40px;height:15px;border:1px solid #999;border-radius:4px;background:#fff"></div>
<div class="sl" style="left:1329px;top:446px;width:361px"></div>
<i class="tri" style="left:1331.5px;top:455px"></i>
<div class="t st" style="left:1340px;top:450px;">Avancement</div>
<div class="bar" style="top:475px"></div>
<div class="t c p" style="left:1460px;width:300px;top:477.5px;letter-spacing:.5px">Dates et durées</div>
<div class="t b2" style="left:1392px;top:497px;">validé</div>
<div class="t b2" style="left:1458px;top:497px;">planifié</div>
<div class="t b2" style="left:1525px;top:497px;">réel</div>
<div class="t b2" style="left:1608px;top:497px;">demandé</div>
<div class="t r " style="left:1086.5px;width:300px;top:512.5px;">date début</div>
<div class="t r " style="left:1086.5px;width:300px;top:538px;">date fin</div>
<div class="t r " style="left:1086.5px;width:300px;top:563.5px;">durée</div>
<div class="in " style="left:1392px;top:512px;width:65px;height:19px;"></div>
<div class="in ro" style="left:1458px;top:512px;width:65px;height:19px;padding-left:7px;overflow:hidden;letter-spacing:.75px">11/08/202</div>
<div class="in ro" style="left:1525px;top:512px;width:65px;height:19px;"></div>
<div class="in " style="left:1608px;top:512px;width:66px;height:19px;"></div>
<div class="in " style="left:1392px;top:537.5px;width:65px;height:19px;"></div>
<div class="in ro" style="left:1458px;top:537.5px;width:65px;height:19px;padding-left:7px;overflow:hidden;letter-spacing:.75px">17/08/202</div>
<div class="in ro" style="left:1525px;top:537.5px;width:65px;height:19px;"></div>
<div class="in " style="left:1608px;top:537.5px;width:66px;height:19px;"></div>
<div class="in num" style="left:1392px;top:563px;width:56px;height:19px;"></div>
<div class="t " style="left:1450px;top:565px;color:#000">j</div>
<div class="in ro num" style="left:1458px;top:563px;width:56px;height:19px;">4</div>
<div class="t " style="left:1516px;top:565px;color:#000">j</div>
<div class="in ro num" style="left:1525px;top:563px;width:56px;height:19px;"></div>
<div class="t " style="left:1583px;top:565px;color:#000">j</div>
<div class="in num" style="left:1608px;top:563px;width:56px;height:19px;"></div>
<div class="t " style="left:1666px;top:565px;color:#000">j</div>
<div class="bar" style="top:590px"></div>
<div class="t c p" style="left:1460px;width:300px;top:592.5px;letter-spacing:.5px">Charges et coûts</div>
<div class="t b2" style="left:1392px;top:612px;">validé</div>
<div class="t b2" style="left:1477px;top:612px;">assigné</div>
<div class="t b2" style="left:1563px;top:612px;">réel</div>
<div class="t b2" style="left:1649px;top:612px;">reste</div>
<div class="t r " style="left:1086.5px;width:300px;top:628.5px;">charge</div>
<div class="t r " style="left:1086.5px;width:300px;top:654px;">coût</div>
<div class="in num" style="left:1392px;top:627px;width:56px;height:19px;">4</div>
<div class="t " style="left:1450px;top:630px;color:#000">j</div>
<div class="in ro num" style="left:1477px;top:627px;width:56px;height:19px;">4</div>
<div class="t " style="left:1535px;top:630px;color:#000">j</div>
<div class="in ro num" style="left:1563px;top:627px;width:56px;height:19px;">0</div>
<div class="t " style="left:1621px;top:630px;color:#000">j</div>
<div class="in ro num" style="left:1649px;top:627px;width:56px;height:19px;"></div>
<div class="t " style="left:1707px;top:630px;color:#000">j</div>
<div class="in " style="left:1392px;top:652.5px;width:75px;height:19px;"></div>
<div class="t " style="left:1468px;top:655px;color:#000;letter-spacing:0">€</div>
<div class="in ro" style="left:1477px;top:652.5px;width:75px;height:19px;"></div>
<div class="t " style="left:1553px;top:655px;color:#000;letter-spacing:0">€</div>
<div class="in ro" style="left:1563px;top:652.5px;width:75px;height:19px;"></div>
<div class="t " style="left:1639px;top:655px;color:#000;letter-spacing:0">€</div>
<div class="in ro" style="left:1649px;top:652.5px;width:75px;height:19px;"></div>
<div class="t " style="left:1725px;top:655px;color:#000;letter-spacing:0">€</div>
<div class="bar" style="top:681px"></div>
<div class="t c p" style="left:1460px;width:300px;top:683.5px;letter-spacing:.5px">Avancement technique</div>
<div class="t b2" style="left:1392px;top:702.5px;">à livrer</div>
<div class="t b2" style="left:1449px;top:702.5px;">à réaliser</div>
<div class="t b2" style="left:1506px;top:702.5px;">réalisé</div>
<div class="t b2" style="left:1564px;top:702.5px;">reste</div>
<div class="t r " style="left:1086.5px;width:300px;top:719px;">nbre unités</div>
<div class="in " style="left:1392px;top:718px;width:50px;height:18px;"></div>
<div class="in " style="left:1449px;top:718px;width:50px;height:18px;"></div>
<div class="in " style="left:1506px;top:718px;width:50px;height:18px;"></div>
<div class="in ro" style="left:1564px;top:718px;width:50px;height:18px;"></div>
<div class="t " style="left:1329px;top:745px;">avancement</div>
<div class="in ro num" style="left:1392px;top:744px;width:50px;height:18px;">0</div>
<div class="t " style="left:1444px;top:746.5px;color:#000;letter-spacing:0">%</div>
<div class="in " style="left:1457px;top:743.5px;width:109px;height:19px;height:18px">calculé<i class="sp"></i><i class="ar"></i></div>
<div class="t " style="left:1576px;top:745.5px;">poids</div>
<div class="in num" style="left:1605px;top:744px;width:50px;height:18px;">0</div>
<div class="in " style="left:1662px;top:744px;width:38px;height:18px;">ma</div>
<div class="bar" style="top:771.5px"></div>
<div class="t c p" style="left:1460px;width:300px;top:774px;letter-spacing:.5px">Pilotage</div>
<div class="t " style="left:1329px;top:799px;">avancement</div>
<div class="t " style="left:1407px;top:799px;color:#111;letter-spacing:1px">0 %</div>
<div class="t " style="left:1457px;top:798px;">avt attendu</div>
<div class="t " style="left:1532px;top:799px;color:#111;letter-spacing:1px">0 %</div>
<div class="t " style="left:1608px;top:798px;">wbs</div>
<div class="t " style="left:1640px;top:799px;color:#111;letter-spacing:.95px">28.3.2</div>
<div class="abs" style="left:1392px;top:814px;width:51px;height:1px;background:#e4e4e4"></div>
<div class="abs" style="left:1517px;top:814px;width:50px;height:1px;background:#e4e4e4"></div>
<div class="abs" style="left:1631px;top:814px;width:59px;height:1px;background:#e4e4e4"></div>
<div class="t r " style="left:1086.5px;width:300px;top:820px;">priorité</div>
<div class="in num" style="left:1392px;top:820px;width:56px;height:18px;">500</div>
<div class="t " style="left:1472px;top:821px;">planning</div>
<div class="in rq" style="left:1517px;top:819.5px;width:141px;height:19px;height:18px">dès que possible<i class="sp"></i><i class="ar"></i></div>
<div class="t r " style="left:1086.5px;width:300px;top:845.5px;">couleur</div>
<div class="abs" style="left:1392px;top:843px;width:18px;height:18px;border:1px solid #ccc;border-radius:4px;background:#fff"></div>
<div class="abs" style="left:1413px;top:844px;width:15.5px;height:15.5px;border-radius:50%;background:conic-gradient(#35b6ea 0deg,#2b86e3 40deg,#6a1de0 80deg,#e02f7c 125deg,#d41f2e 170deg,#e8451d 215deg,#f9d423 255deg,#45a549 300deg,#62d3d6 345deg,#35b6ea 360deg)"><i class="abs" style="left:5.5px;top:5.5px;width:4.5px;height:4.5px;border-radius:50%;background:#f4f8ff"></i></div>
<svg class="abs" style="left:1431px;top:850px" width="5" height="3" viewBox="0 0 5 3"><path d="M0 0h5L2.5 3z" fill="#000"/></svg>
<div class="abs" style="left:1443px;top:842px;width:56px;height:19px;border:1px solid #c4c4cc;border-radius:4px;background:#efeff7"></div>
<div class="t c p" style="left:1321px;width:300px;top:845px;letter-spacing:.45px;color:#3f3e7b">effacer</div>
<div class="t r " style="left:1146px;width:300px;top:868.5px;">seuil minimum</div>
<div class="in num" style="left:1452px;top:866px;width:56px;height:18px;">0</div>
<div class="t " style="left:1510px;top:869px;color:#000">j</div>
<div class="t " style="left:1524px;top:868px;">travail insécable</div>
<div class="ck" style="left:1609px;top:869px"></div>
<div class="t r " style="left:1146px;width:300px;top:892.5px;">figer le planning</div>
<div class="ck" style="left:1452px;top:893px"></div>
<div class="t " style="left:1465px;top:892px;">exclure du calcul du planning</div>
<div class="t r " style="left:1146px;width:300px;top:917.5px;">mettre en pause</div>
<div class="ck" style="left:1452px;top:918px"></div>
<div class="t " style="left:1465px;top:917px;letter-spacing:.4px">exclure du planning et purger le planifié actuel</div>
<!--/DETAIL-->
<!--MISC-->
<svg class="abs" style="left:168px;top:53px" width="20" height="17" viewBox="0 0 20 17" fill="none" stroke="#45447f" stroke-width="1"><rect x=".5" y=".5" width="6" height="5.500"/><rect x="12.500" y=".5" width="6.500" height="5.500"/><rect x="12.500" y="10.500" width="6.500" height="5.500"/><path d="M6.500 3.300h6M9.600 3.300v10h3"/></svg>
<svg class="abs" style="left:165px;top:317.3px" width="20" height="17" viewBox="0 0 20 17" fill="none" stroke="#45447f" stroke-width="1"><rect x=".5" y=".5" width="6" height="5.500"/><rect x="12.500" y=".5" width="6.500" height="5.500"/><rect x="12.500" y="10.500" width="6.500" height="5.500"/><path d="M6.500 3.300h6M9.600 3.300v10h3"/></svg>
<div class="abs" style="left:1132px;top:316px;width:21px;height:19px;border:1px solid #8a8a8a;background:#fff;border-radius:1px"></div>
<svg class="abs" style="left:1132px;top:313.500px" width="21" height="6" viewBox="0 0 21 6" fill="#fff" stroke="#8a8a8a" stroke-width=".8"><path d="M3 2.600h15" /><rect x="3.200" y=".5" width="1.800" height="4" rx=".9"/><rect x="9.600" y=".5" width="1.800" height="4" rx=".9"/><rect x="16" y=".5" width="1.800" height="4" rx=".9"/></svg>
<div class="abs" style="left:1132px;top:320.500px;width:21px;text-align:center;font-family:'DejaVu Sans',sans-serif;font-size:5.500px;line-height:6px;font-weight:bold;color:#000;letter-spacing:-.2px">04/07<br>2022</div>
<div class="abs" style="left:1020px;top:310px;width:14px;height:2px;border-top:1px dotted #fff;border-bottom:1px dotted #fff"></div>
<div class="abs" style="left:1339px;top:399.500px;width:10px;height:10.500px;border:1px solid #9d9cce;border-radius:2px;background:#f4f4fc"></div>
<svg class="abs" style="left:1341.500px;top:402.500px" width="5" height="5" viewBox="0 0 5 5" stroke="#2a2a7a" stroke-width="1.200"><path d="M2.500 0v5M0 2.500h5"/></svg>
<svg class="abs" style="left:1352px;top:399px" width="11" height="11" viewBox="0 0 11 11" fill="none" stroke="#9d9cce" stroke-width=".9"><circle cx="4.500" cy="3" r="2.200"/><path d="M.5 10.500c0-3 1.500-4.500 4-4.500s4 1.500 4 4.500z"/><circle cx="8.200" cy="3.800" r="1.600"/><path d="M9 6.500c1.200.4 1.700 1.500 1.700 3H9"/></svg>
<svg class="abs" style="left:1366px;top:399px" width="11" height="11" viewBox="0 0 11 11" fill="none" stroke="#9d9cce" stroke-width=".9"><circle cx="5.500" cy="1.800" r="1.300"/><path d="M5.500 3.200v3M1.800 7.500V6h7.400v1.500M.5 10.500l1.300-3 1.300 3zM4.200 10.500l1.300-3 1.300 3zM7.900 10.500l1.300-3 1.300 3z"/></svg>
<svg class="abs" style="left:1380px;top:398.500px" width="11" height="12" viewBox="0 0 11 12" fill="none" stroke="#9d9cce" stroke-width=".9"><circle cx="4.500" cy="4.500" r="2"/><path d="M.5 11.500c0-3 1.500-4.300 4-4.300s4 1.300 4 4.300z"/><path d="M9 7.500c1.200.4 1.700 1.500 1.700 3.200H9"/><path d="M2.300 3l2.200-2.500L6.700 3zM6.500 3.500L8.200 1.800 9.700 3.800z" fill="#2a2a7a" stroke="none"/></svg>
<svg class="abs" style="left:1335px;top:419px" width="11" height="11" viewBox="0 0 11 11" fill="none" stroke="#9d9cce" stroke-width=".9"><path d="M.8 10.200l.7-3L7.800.9l2.300 2.300L3.800 9.500zM1.500 7.200l2.300 2.300M6.800 1.900l2.300 2.300"/></svg>
<svg class="abs" style="left:1351.500px;top:419px" width="10" height="11" viewBox="0 0 10 11" fill="none" stroke="#9d9cce" stroke-width=".9"><path d="M.3 2h9.400M3.500 2V.6h3V2M1.200 2.300l.4 8.200h6.800l.4-8.200M3.300 3.800v5.400M5 3.800v5.400M6.700 3.800v5.400"/></svg>
<svg class="abs" style="left:1367px;top:419px" width="12" height="11" viewBox="0 0 12 11" fill="none" stroke="#9d9cce" stroke-width=".9"><path d="M0 5.500h4.500M4.500 5.500c1.500 0 1.500-3.500 3.500-3.500h3M4.500 5.500c1.500 0 1.500 3.500 3.500 3.500h3M9.200.3L11 2 9.200 3.700M9.200 7.300L11 9l-1.800 1.700"/></svg>
<svg class="abs" style="left:1386px;top:420px" width="7" height="10" viewBox="0 0 7 10" fill="none" stroke="#9d9cce" stroke-width=".9"><path d="M.8 .5v9L6 5z"/></svg>
<!--/MISC-->
</body>
</html>
